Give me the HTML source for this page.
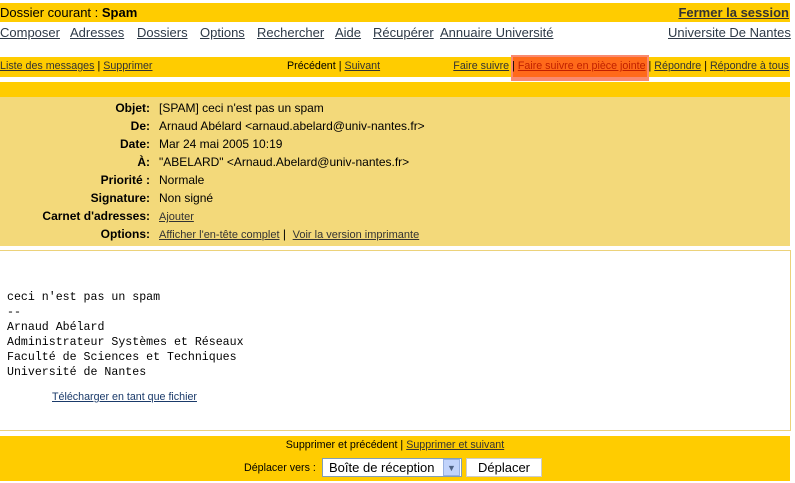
<!DOCTYPE html>
<html><head><meta charset="utf-8"><style>
*{margin:0;padding:0;box-sizing:border-box}
body{width:795px;height:483px;background:#fff;font-family:"Liberation Sans",Arial,sans-serif;color:#000;position:relative;overflow:hidden}
a{color:#333;text-decoration:underline}
.abs{position:absolute}
.y{background:#ffcc00}
.nav a{position:absolute;top:25px;font-size:13px;color:#2e3a48}
.r3{font-size:10.7px;top:60px;white-space:nowrap}
.lab{position:absolute;right:645px;font-size:12px;font-weight:bold;white-space:nowrap}
.val{position:absolute;left:159px;font-size:12px;white-space:nowrap}
.val a{font-size:11px}
pre{font-family:"Liberation Mono","Courier New",monospace;font-size:11.6px;line-height:15px}
</style></head><body>
<div class="abs y" style="left:0;top:3px;width:790px;height:19px"></div>
<div class="abs" style="left:0;top:5px;font-size:13px">Dossier courant : <b>Spam</b></div>
<div class="abs" style="right:6px;top:5px;font-size:13px;font-weight:bold"><a href="#" style="color:#333">Fermer la session</a></div>
<div class="nav">
<a href="#" style="left:0">Composer</a>
<a href="#" style="left:70px">Adresses</a>
<a href="#" style="left:137px">Dossiers</a>
<a href="#" style="left:200px">Options</a>
<a href="#" style="left:257px">Rechercher</a>
<a href="#" style="left:335px">Aide</a>
<a href="#" style="left:373px">Récupérer</a>
<a href="#" style="left:440px">Annuaire Université</a>
<a href="#" style="left:668px">Universite De Nantes</a>
</div>
<div class="abs y" style="left:0;top:57px;width:790px;height:20px"></div>
<div class="abs" style="left:511px;top:55px;width:138px;height:26px;background:#f98a70"></div>
<div class="abs" style="left:513px;top:57px;width:134px;height:20px;background:#ff6a1a"></div>
<div class="abs r3" style="left:0"><a href="#">Liste des messages</a> | <a href="#">Supprimer</a></div>
<div class="abs r3" style="left:287px">Précédent | <a href="#">Suivant</a></div>
<div class="abs r3" style="right:6px"><a href="#">Faire suivre</a> | <a href="#" style="color:#c02000">Faire suivre en pièce jointe</a> | <a href="#">Répondre</a> | <a href="#">Répondre à tous</a></div>
<div class="abs y" style="left:0;top:82px;width:790px;height:15px"></div>
<div class="abs" style="left:0;top:97px;width:790px;height:149px;background:#f3d97a"></div>
<div class="lab" style="top:101px">Objet:</div><div class="val" style="top:101px">[SPAM] ceci n'est pas un spam</div>
<div class="lab" style="top:119px">De:</div><div class="val" style="top:119px">Arnaud Abélard &lt;arnaud.abelard@univ-nantes.fr&gt;</div>
<div class="lab" style="top:137px">Date:</div><div class="val" style="top:137px">Mar 24 mai 2005 10:19</div>
<div class="lab" style="top:155px">À:</div><div class="val" style="top:155px">"ABELARD" &lt;Arnaud.Abelard@univ-nantes.fr&gt;</div>
<div class="lab" style="top:173px">Priorité :</div><div class="val" style="top:173px">Normale</div>
<div class="lab" style="top:191px">Signature:</div><div class="val" style="top:191px">Non signé</div>
<div class="lab" style="top:209px">Carnet d'adresses:</div><div class="val" style="top:209px"><a href="#">Ajouter</a></div>
<div class="lab" style="top:227px">Options:</div><div class="val" style="top:227px"><a href="#">Afficher l'en-tête complet</a> | &nbsp;<a href="#">Voir la version imprimante</a></div>
<div class="abs" style="left:0;top:250px;width:791px;height:181px;border:1px solid #ecd27a;border-left:none"></div>
<pre class="abs" style="left:7px;top:290px">ceci n'est pas un spam
--
Arnaud Abélard
Administrateur Systèmes et Réseaux
Faculté de Sciences et Techniques
Université de Nantes</pre>
<div class="abs" style="left:52px;top:391px;font-size:10.7px"><a href="#" style="color:#1a3a6a">Télécharger en tant que fichier</a></div>
<div class="abs y" style="left:0;top:436px;width:790px;height:45px"></div>
<div class="abs" style="left:0;width:790px;top:439px;text-align:center;font-size:10.7px">Supprimer et précédent | <a href="#">Supprimer et suivant</a></div>
<div class="abs" style="left:244px;top:462px;font-size:10.7px">Déplacer vers :</div>
<div class="abs" style="left:322px;top:458px;width:140px;height:19px;background:#fff;border:1px solid #7f9db9;font-size:13px;padding:1px 0 0 6px">Boîte de réception</div>
<div class="abs" style="left:443px;top:459px;width:17px;height:17px;background:#c1d3fb;border:1px solid #98b0e0;font-size:9px;text-align:center;line-height:16px;color:#4d6185">▼</div>
<div class="abs" style="left:466px;top:458px;width:76px;height:19px;background:#fff;border:1px solid #ccc;font-size:13px;text-align:center;line-height:17px">Déplacer</div>
</body></html>
